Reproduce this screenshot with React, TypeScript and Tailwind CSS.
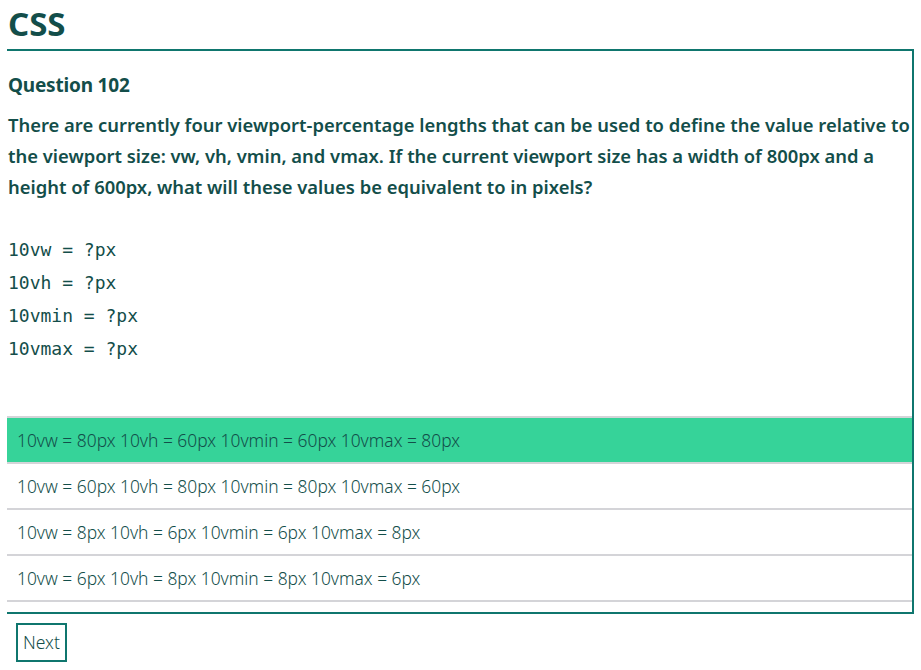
const answers = [
  "10vw = 80px 10vh = 60px 10vmin = 60px 10vmax = 80px",
  "10vw = 60px 10vh = 80px 10vmin = 80px 10vmax = 60px",
  "10vw = 8px 10vh = 6px 10vmin = 6px 10vmax = 8px",
  "10vw = 6px 10vh = 8px 10vmin = 8px 10vmax = 6px",
];

const code = ["10vw = ?px", "10vh = ?px", "10vmin = ?px", "10vmax = ?px"];

export default function App() {
  return (
    <div className="min-h-screen bg-white px-[7px] text-[#134e4a] font-['Noto_Sans','Open_Sans',sans-serif]">
      <h1 className="text-[33px] font-bold leading-[46px] pt-[1px] pb-[2px] pl-[1px]">CSS</h1>

      <div className="border-t-2 border-r-2 border-b-2 border-[#0f766e] pb-[10px]">
        <h2 className="text-[19px] font-bold leading-[26px] pt-[21px] pl-[1px] tracking-[-0.2px]">Question 102</h2>
        <p className="text-[18.4px] font-semibold leading-[31px] mt-[11px] pl-[1px]">
          There are currently four viewport-percentage lengths that can be used to define the value relative to
          <br />
          the viewport size: vw, vh, vmin, and vmax. If the current viewport size has a width of 800px and a
          <br />
          height of 600px, what will these values be equivalent to in pixels?
        </p>
        <pre className="mt-[31px] pl-[1px] text-[18px] leading-[33px] font-['DejaVu_Sans_Mono','Liberation_Mono',monospace]">
          {code.join("\n")}
        </pre>

        <ul className="mt-[51px] border-t-2 border-[#d4d4d8]">
          {answers.map((a, i) => (
            <li
              key={a}
              className={`border-b-2 border-[#d4d4d8] pl-[10px] h-[46px] flex items-center text-[17.4px] font-light ${
                i === 0 ? "bg-[#36d399]" : "bg-white"
              }`}
            >
              {a}
            </li>
          ))}
        </ul>
      </div>

      <button className="block mt-[9px] ml-[9px] h-[39px] px-[5px] border-2 border-[#0f766e] text-[17.5px] font-light text-[#134e4a]">
        Next
      </button>
    </div>
  );
}
